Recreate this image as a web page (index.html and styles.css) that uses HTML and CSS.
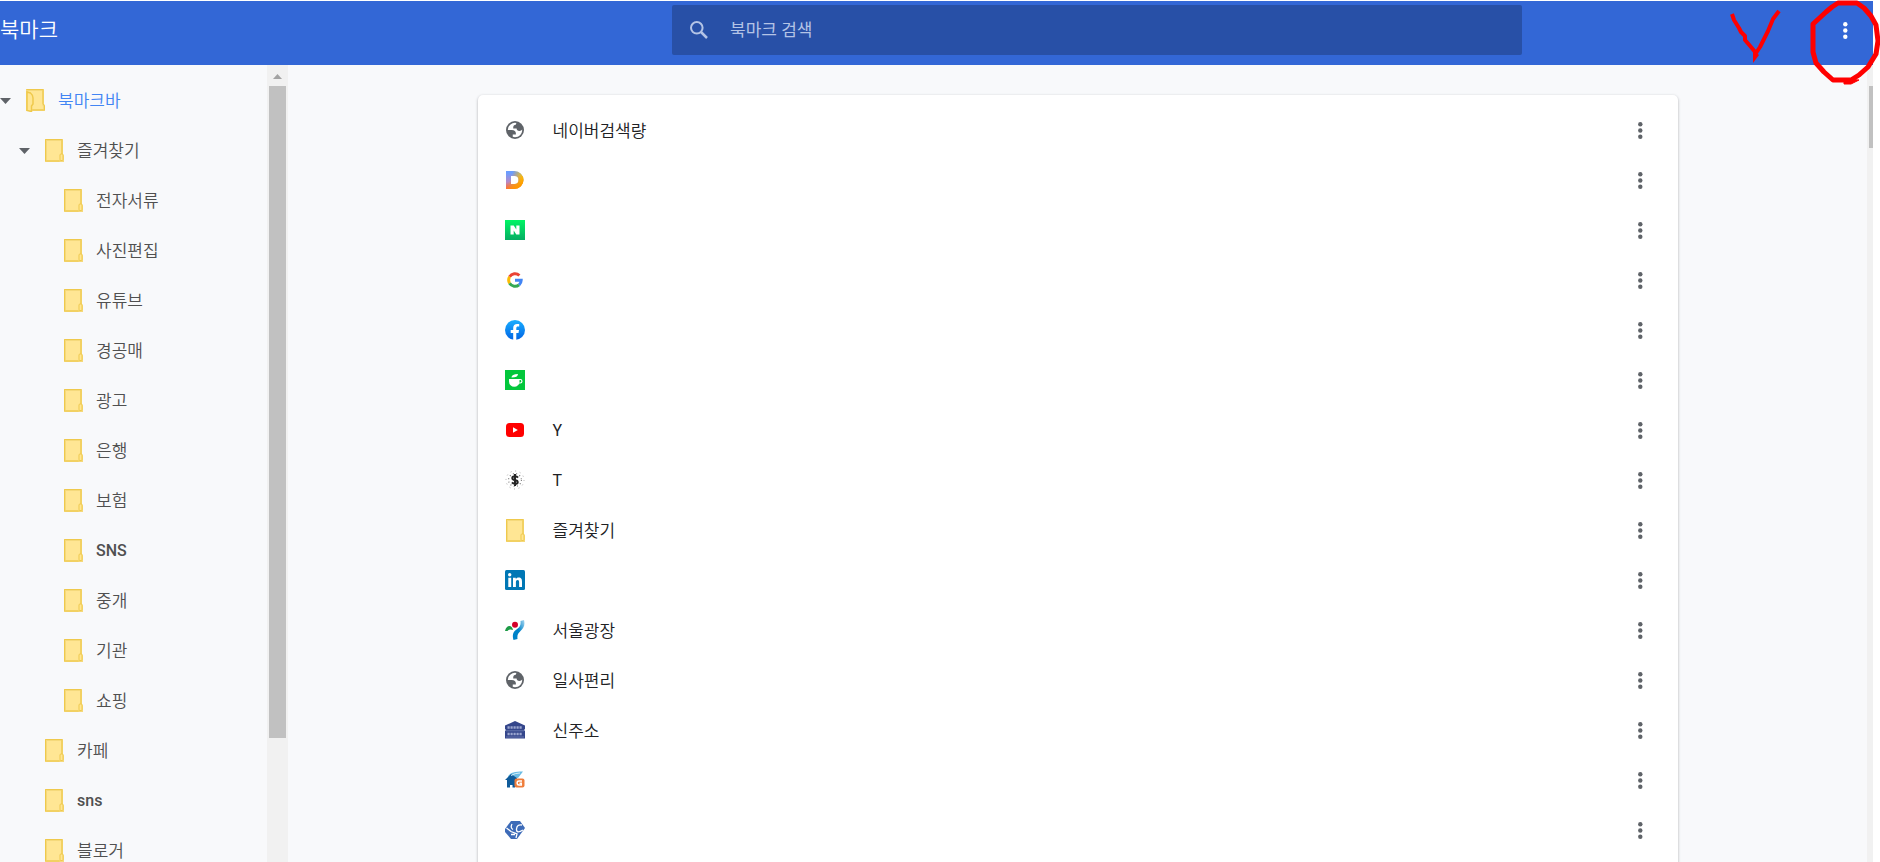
FILE: index.html
```html
<!DOCTYPE html>
<html lang="ko">
<head>
<meta charset="utf-8">
<title>북마크</title>
<link rel="stylesheet" href="styles.css">
</head>
<body>
<svg class="defs" aria-hidden="true">
  <defs>
    <linearGradient id="dg" x1="0" y1="0" x2="0" y2="1"><stop offset="0.1" stop-color="#6a9dff"/><stop offset="0.6" stop-color="#b48ac8"/><stop offset="1" stop-color="#ff5f57"/></linearGradient>
    <linearGradient id="dy" x1="0.25" y1="0.4" x2="0.9" y2="0.6"><stop offset="0" stop-color="#ffb000" stop-opacity="0"/><stop offset="1" stop-color="#ffd000"/></linearGradient>
    <linearGradient id="do" x1="0.3" y1="0.5" x2="0.6" y2="1"><stop offset="0" stop-color="#ff8a00" stop-opacity="0"/><stop offset="1" stop-color="#ff9300"/></linearGradient>
    <linearGradient id="ng" x1="0" y1="0" x2="0" y2="1"><stop offset="0" stop-color="#00f565"/><stop offset="1" stop-color="#05ad62"/></linearGradient>
    <linearGradient id="fg" x1="0" y1="0" x2="0" y2="1"><stop offset="0" stop-color="#19aeff"/><stop offset="1" stop-color="#0163e4"/></linearGradient>
    <linearGradient id="sg" x1="0" y1="1" x2="1" y2="0"><stop offset="0.5" stop-color="#0082c8"/><stop offset="1" stop-color="#a9d8f2"/></linearGradient>
  </defs>
  <symbol id="folder" viewBox="0 0 20 24">
    <path d="M1 2h16v14l1 2v5h-17z" fill="#ffe694" stroke="#f5d97b" stroke-width="2"/>
    <path d="M.5 1.500h16.500v15M.5 1.500v21.500h14" fill="none" stroke="#efc94c"/>
    <rect x="15" y="16" width="3" height="6.500" rx="1" fill="#ffe694" stroke="#efc94c"/>
  </symbol>
  <symbol id="folder-open" viewBox="0 0 20 24">
    <path d="M1 2h16v14l1 2v4h-17z" fill="#ffe694" stroke="#f5d97b" stroke-width="2"/>
    <path d="M.5 1.500h16.500v14l1.500 2.500v4h-12" fill="none" stroke="#efc94c"/>
    <path d="M1 4l3.500 1q2.500 2 2.500 5v6l-1.500 2v5.500l-4.500-1z" fill="#ffe694" stroke="#efc94c" stroke-width="1.500"/>
  </symbol>
  <symbol id="dots" viewBox="0 0 20 20">
    <circle cx="10.300" cy="4.200" r="2.200"/><circle cx="10.300" cy="10.500" r="2.200"/><circle cx="10.300" cy="16.800" r="2.200"/>
  </symbol>
  <symbol id="globe" viewBox="2 2 20 20">
    <circle cx="12" cy="12" r="10" fill="#5f6368"/>
    <path fill="#fff" d="M4 12h4.400c3.407.022 4.922 1.730 4.543 5.127H9.488v2.470a8.004 8.004 0 0 0 10.498-8.080C19.327 12.506 18.332 13 17 13c-2.137 0-3.206-.916-3.206-2.750h-3.748c-.274-2.728.683-4.092 2.870-4.092 0-.975.327-1.597.811-1.970A8.004 8.004 0 0 0 4 12z"/>
  </symbol>
</svg>

<header class="topbar">
  <h1 class="title">북마크</h1>
  <label class="search">
    <svg class="search-icon" viewBox="0 0 18 18" aria-hidden="true"><circle cx="6.800" cy="6.800" r="5.800" fill="none" stroke="currentColor" stroke-width="2"/><path d="M11 11l6 6" stroke="currentColor" stroke-width="2.500"/></svg>
    <input class="search-input" type="search" placeholder="북마크 검색" aria-label="북마크 검색">
  </label>
  <button class="more more-top" aria-label="정리"><svg viewBox="0 0 20 20"><use href="#dots"/></svg></button>
</header>

<div class="layout">
  <nav class="sidebar" aria-label="폴더">
    <ul class="tree">
      <li class="node level-0 selected"><button class="arrow" aria-label="접기"></button><svg class="folder"><use href="#folder-open"/></svg><span class="label">북마크바</span></li>
      <li class="node level-1"><button class="arrow" aria-label="접기"></button><svg class="folder"><use href="#folder"/></svg><span class="label">즐겨찾기</span></li>
      <li class="node level-2"><svg class="folder"><use href="#folder"/></svg><span class="label">전자서류</span></li>
      <li class="node level-2"><svg class="folder"><use href="#folder"/></svg><span class="label">사진편집</span></li>
      <li class="node level-2"><svg class="folder"><use href="#folder"/></svg><span class="label">유튜브</span></li>
      <li class="node level-2"><svg class="folder"><use href="#folder"/></svg><span class="label">경공매</span></li>
      <li class="node level-2"><svg class="folder"><use href="#folder"/></svg><span class="label">광고</span></li>
      <li class="node level-2"><svg class="folder"><use href="#folder"/></svg><span class="label">은행</span></li>
      <li class="node level-2"><svg class="folder"><use href="#folder"/></svg><span class="label">보험</span></li>
      <li class="node level-2"><svg class="folder"><use href="#folder"/></svg><span class="latin">SNS</span></li>
      <li class="node level-2"><svg class="folder"><use href="#folder"/></svg><span class="label">중개</span></li>
      <li class="node level-2"><svg class="folder"><use href="#folder"/></svg><span class="label">기관</span></li>
      <li class="node level-2"><svg class="folder"><use href="#folder"/></svg><span class="label">쇼핑</span></li>
      <li class="node level-1 leaf"><svg class="folder"><use href="#folder"/></svg><span class="label">카페</span></li>
      <li class="node level-1 leaf"><svg class="folder"><use href="#folder"/></svg><span class="latin">sns</span></li>
      <li class="node level-1 leaf"><svg class="folder"><use href="#folder"/></svg><span class="label">블로거</span></li>
    </ul>
  </nav>
  <div class="scrollbar scrollbar-side" aria-hidden="true"><div class="scroll-up"></div><div class="thumb"></div></div>

  <main class="content">
    <ul class="card">
      <li class="item"><svg class="favicon" viewBox="0 0 20 20"><use href="#globe" x="1" y="1" width="18" height="18"/></svg><span class="name label">네이버검색량</span><button class="more" aria-label="추가 작업"><svg viewBox="0 0 20 20"><use href="#dots"/></svg></button></li>
      <li class="item"><svg class="favicon" viewBox="0 0 20 20"><g fill-rule="evenodd"><path fill="url(#dg)" d="M1 1h8.500a9 9 0 0 1 0 18H1zM6 6v8h3.500a4 4 0 0 0 0-8z"/><path fill="url(#dy)" d="M1 1h8.500a9 9 0 0 1 0 18H1zM6 6v8h3.500a4 4 0 0 0 0-8z"/><path fill="url(#do)" d="M1 1h8.500a9 9 0 0 1 0 18H1zM6 6v8h3.500a4 4 0 0 0 0-8z"/></g></svg><span class="name"></span><button class="more" aria-label="추가 작업"><svg viewBox="0 0 20 20"><use href="#dots"/></svg></button></li>
      <li class="item"><svg class="favicon" viewBox="0 0 20 20"><path fill="url(#ng)" d="M0 0h20v20H0z"/><path d="M5.500 5.500h3.200l2.600 4v-4h3.200v9h-3.200l-2.600-4v4H5.500z" fill="#fff"/></svg><span class="name"></span><button class="more" aria-label="추가 작업"><svg viewBox="0 0 20 20"><use href="#dots"/></svg></button></li>
      <li class="item"><svg class="favicon" viewBox="0 0 20 20"><g fill="none" stroke-width="3"><path stroke="#ea4335" d="M4.600 6.800A6.300 6.300 0 0 1 14.400 5.500"/><path stroke="#fbbc05" d="M4.600 13.200A6.300 6.300 0 0 1 4.600 6.800"/><path stroke="#34a853" d="M14.100 14.800A6.300 6.300 0 0 1 4.600 13.200"/><path stroke="#4285f4" d="M10 10.200h6.200a6.300 6.300 0 0 1-2.100 4.600"/></g></svg><span class="name"></span><button class="more" aria-label="추가 작업"><svg viewBox="0 0 20 20"><use href="#dots"/></svg></button></li>
      <li class="item"><svg class="favicon" viewBox="0 0 20 20"><circle cx="10" cy="10" r="10" fill="url(#fg)"/><path fill="#fff" d="M8.200 19.900v-6.900H5.700v-3h2.500V8c0-2.600 1.500-4.100 3.900-4.100 1.100 0 2.100.200 2.100.200v2.500h-1.200c-1.300 0-1.700.700-1.700 1.600V10H14l-.5 3h-2.200v6.900q-1.600.2-3.100 0z"/></svg><span class="name"></span><button class="more" aria-label="추가 작업"><svg viewBox="0 0 20 20"><use href="#dots"/></svg></button></li>
      <li class="item"><svg class="favicon" viewBox="0 0 20 20"><path fill="#03c73c" d="M0 0h20v20H0z"/><path fill="#fff" d="M4 9h10.500v2.500a5.200 5.200 0 0 1-10.500 0zM6.500 7.500q0-3.500 6.500-3.500 0 3.500-6.500 3.500z"/><path d="M14 9.500h1.200a1.600 1.600 0 0 1 0 3.500h-1.700" fill="none" stroke="#fff" stroke-width="1.200"/></svg><span class="name"></span><button class="more" aria-label="추가 작업"><svg viewBox="0 0 20 20"><use href="#dots"/></svg></button></li>
      <li class="item"><svg class="favicon" viewBox="0 0 20 20"><rect x="1" y="3" width="18" height="14" rx="3.500" fill="#f00"/><path fill="#fff" d="M8 7.200v5.600l4.800-2.800z"/></svg><span class="name latin">Y</span><button class="more" aria-label="추가 작업"><svg viewBox="0 0 20 20"><use href="#dots"/></svg></button></li>
      <li class="item"><svg class="favicon" viewBox="0 0 20 20"><circle cx="10" cy="10" r="6.400" fill="none" stroke="#777" stroke-width="1.200" stroke-dasharray="1 2.400"/><circle cx="10" cy="10" r="9" fill="none" stroke="#aaa" stroke-dasharray="1 3.700"/><path d="M13 7.600Q12 6.200 10 6.200c-3.600 0-3.600 3.200 0 3.800s3.600 3.800 0 3.800q-2 0-3-1.400M10 4v12" fill="none" stroke="#222" stroke-width="2"/></svg><span class="name latin">T</span><button class="more" aria-label="추가 작업"><svg viewBox="0 0 20 20"><use href="#dots"/></svg></button></li>
      <li class="item"><svg class="favicon favicon-folder" viewBox="0 0 20 24"><use href="#folder" x="1" width="20" height="24"/></svg><span class="name label">즐겨찾기</span><button class="more" aria-label="추가 작업"><svg viewBox="0 0 20 20"><use href="#dots"/></svg></button></li>
      <li class="item"><svg class="favicon" viewBox="0 0 20 20"><rect width="20" height="20" rx="1.500" fill="#0077b5"/><circle cx="4.700" cy="4.700" r="1.700" fill="#fff"/><path fill="#fff" d="M3.300 7.700h2.900V17H3.300zM8 7.700h2.800V9c.5-.900 1.500-1.500 2.800-1.500 2.800 0 3.400 1.800 3.400 4.300V17h-2.900v-4.600c0-1.200-.1-2.400-1.500-2.400S10.900 11 10.900 12.300V17H8z"/></svg><span class="name"></span><button class="more" aria-label="추가 작업"><svg viewBox="0 0 20 20"><use href="#dots"/></svg></button></li>
      <li class="item"><svg class="favicon" viewBox="0 0 20 20"><circle cx="10" cy="4.800" r="3" fill="#d4002a"/><path fill="#1d9b46" d="M0 11c1-4 3-5 4.500-5S7.500 7.500 8 10C5.500 9 3.500 9.500 2.500 11z"/><path fill="url(#sg)" d="M15.500 1l3.500-1c1.500 6-1 8.500-3.500 11S12 15 12.500 19l-4 1C7 15 8 12 11.500 9.500S16 5 15.500 1z"/></svg><span class="name label">서울광장</span><button class="more" aria-label="추가 작업"><svg viewBox="0 0 20 20"><use href="#dots"/></svg></button></li>
      <li class="item"><svg class="favicon" viewBox="0 0 20 20"><use href="#globe" x="1" y="1" width="18" height="18"/></svg><span class="name label">일사편리</span><button class="more" aria-label="추가 작업"><svg viewBox="0 0 20 20"><use href="#dots"/></svg></button></li>
      <li class="item"><svg class="favicon" viewBox="0 0 20 20"><path fill="#34468b" d="M0 5.500L10 1l10 4.500V9l-1 1 1 1v7.500H0V11l1-1-1-1z"/><path d="M2.500 7.500h15M2.500 14h15" stroke="#9ba6cf" stroke-width="2.500" stroke-dasharray="2.200 .8"/><path d="M1 10.800h18M1 17h18" stroke="#6675ad"/></svg><span class="name label">신주소</span><button class="more" aria-label="추가 작업"><svg viewBox="0 0 20 20"><use href="#dots"/></svg></button></li>
      <li class="item"><svg class="favicon" viewBox="0 0 20 20"><path fill="#6bbce4" d="M3 7c2-5 7-5.500 15-5.500L13 8z"/><path fill="#0f5b9a" d="M0 10l6-6 6 4-2 9.500H7.500V15H5v2.500H2V10z"/><path d="M6 5.500q4-2.500 9-2.500" fill="none" stroke="#d6eef8"/><rect x="9.500" y="8.500" width="10" height="9" rx="2" fill="#ef7d3b"/><path d="M17 11h-3q-1.800 0-1.800 1.300v1.200q0 1.500 1.800 1.500h2.300v-1.800H14.500" fill="none" stroke="#fff" stroke-width="1.500"/></svg><span class="name"></span><button class="more" aria-label="추가 작업"><svg viewBox="0 0 20 20"><use href="#dots"/></svg></button></li>
      <li class="item"><svg class="favicon" viewBox="0 0 20 20"><path fill="#3d6bb8" d="M6 1h9l5 7-8 11H6L0 12V9z"/><path d="M1.500 8l4.500 3.500 6 2.500-1 4M7 4q-2 4 1 5.500M17 5q-5-1-5.500 4t6.500 1M6 14.500h4" fill="none" stroke="#fff" stroke-width="1.300"/></svg><span class="name"></span><button class="more" aria-label="추가 작업"><svg viewBox="0 0 20 20"><use href="#dots"/></svg></button></li>
      <li class="item"></li>
    </ul>
  </main>
  <div class="scrollbar scrollbar-main" aria-hidden="true"><div class="thumb"></div></div>
</div>

<svg class="markup" viewBox="0 0 160 90" aria-hidden="true">
  <g fill="none" stroke="#f00" stroke-linejoin="round">
    <path d="M12 14l2 6 5 8 2 4 4 4v4l6 7 5 6 4-6 8-16 5-12 6-8" stroke-width="4"/>
    <path d="M33 50l0 13 6-8z" fill="#f00" stroke="none"/>
    <path d="M118 3h19l7 5 7 8 5 9 2 16-2 13-8 13-9 8-8 5h-18l-9-8-8-9-3-11V24l13-12 6-5z" stroke-width="5"/>
    <path d="M124 79v5h7l8-4z" fill="#f00"/>
  </g>
</svg>
</body>
</html>
```
FILE: styles.css
```css
* {
  box-sizing: border-box;
}

body {
  margin: 0;
  height: 100vh;
  padding: 1px 7px 0 0;
  display: flex;
  flex-direction: column;
  overflow: hidden;
  background: #fff;
  color: #202124;
  font-family: Roboto, "Noto Sans CJK KR", sans-serif;
  font-size: 17px;
  font-weight: 350;
}

ul {
  list-style: none;
  margin: 0;
  padding: 0;
}

button {
  border: 0;
  padding: 0;
  background: none;
  color: inherit;
}

.defs {
  position: absolute;
  width: 0;
  height: 0;
}

.topbar {
  flex: none;
  height: 64px;
  display: grid;
  grid-template-columns: 321px 1fr minmax(0, 850px) 1fr;
  background: #3367d6;
  color: #fff;
}

.title {
  margin: 0;
  font-size: 21px;
  font-weight: 350;
  line-height: 58px;
}

.search {
  grid-column: 3;
  height: 50px;
  margin-top: 4px;
  padding-left: 18px;
  display: flex;
  align-items: center;
  gap: 22px;
  border-radius: 2px;
  background: #2850a7;
  color: #b4c4e6;
}

.search-icon {
  width: 18px;
  height: 18px;
}

.search-input {
  flex: 1;
  min-width: 0;
  border: 0;
  padding: 0;
  outline: 0;
  background: none;
  color: inherit;
  font: inherit;
  font-weight: 400;
}

.search-input::placeholder {
  color: inherit;
}

.more {
  flex: none;
  width: 20px;
  height: 20px;
  color: #5f6368;
}

.more svg {
  display: block;
  width: 20px;
  height: 20px;
  fill: currentColor;
}

.more-top {
  justify-self: end;
  margin: 19px 18px 0 0;
  color: #fff;
}

.layout {
  flex: 1;
  min-height: 0;
  display: flex;
  background: #f8f9fb;
}

.sidebar {
  flex: none;
  width: 267px;
  padding-top: 10px;
  overflow: hidden;
  color: #505050;
}

.node {
  height: 50px;
  display: flex;
  align-items: center;
}

.level-1 {
  padding-left: 19px;
}

.level-2 {
  padding-left: 64px;
}

.leaf {
  padding-left: 45px;
}

.selected {
  color: #4285f4;
}

.arrow {
  flex: none;
  width: 11px;
  height: 6px;
  margin: 2px 15px 0 0;
  background: #5f6368;
  clip-path: polygon(0 0, 100% 0, 50% 100%);
}

.folder {
  flex: none;
  width: 20px;
  height: 24px;
  margin-right: 12px;
}

.label {
  padding-bottom: 2px;
}

.latin {
  font-size: 16px;
}

.node .latin {
  font-weight: 500;
}

.scrollbar {
  flex: none;
  background: #f1f1f1;
}

.scrollbar-side {
  width: 21px;
  padding: 0 2px;
}

.scrollbar-main {
  width: 6px;
  padding: 21px 0 0 2px;
}

.scroll-up {
  width: 9px;
  height: 5px;
  margin: 9px 4px 7px;
  background: #a3a3a3;
  clip-path: polygon(50% 0, 100% 100%, 0 100%);
}

.thumb {
  background: #c1c1c1;
}

.scrollbar-side .thumb {
  height: 652px;
}

.scrollbar-main .thumb {
  height: 62px;
}

.content {
  flex: 1;
  min-width: 0;
  padding: 30px 24px 0;
  overflow: hidden;
}

.card {
  max-width: 1200px;
  margin: 0 auto;
  padding: 10px 28px 10px 27px;
  border-radius: 5px;
  background: #fff;
  box-shadow: 0 1px 3px rgba(60, 64, 67, 0.4);
}

.item {
  height: 50px;
  display: flex;
  align-items: center;
}

.favicon {
  flex: none;
  width: 20px;
  height: 20px;
  margin-right: 28px;
}

.favicon-folder {
  height: 24px;
}

.name {
  flex: 1;
}

.name.latin {
  font-weight: 400;
}

.markup {
  position: absolute;
  top: 0;
  right: 0;
  width: 160px;
  height: 90px;
  pointer-events: none;
}
```
